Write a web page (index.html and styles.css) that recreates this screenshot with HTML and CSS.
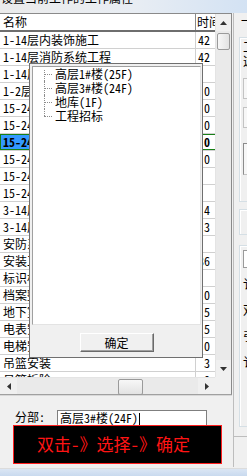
FILE: index.html
```html
<!DOCTYPE html>
<html>
<head>
	<title>设置当前工作的工作属性</title>
	<meta charset="utf-8">
	<link rel="stylesheet" href="styles.css">
</head>
<body>

	<div class="caption"><span>设置当前工作的工作属性</span></div>

	<div class="frame">
		<div class="left">
			<div class="list">
				<div class="grid">
					<div class="head">
						<div class="c1">名称</div>
						<div class="c2">时间</div>
					</div>
					<div class="row"><div class="c1">1-14层内装饰施工</div><div class="c2">42</div></div>
					<div class="row"><div class="c1">1-14层消防系统工程</div><div class="c2">42</div></div>
					<div class="row"><div class="c1">1-14层给排水安装</div><div class="c2"></div></div>
					<div class="row"><div class="c1">1-2层钢结构工程</div><div class="c2">0</div></div>
					<div class="row"><div class="c1">15-24层主体结构</div><div class="c2">0</div></div>
					<div class="row"><div class="c1">15-24层砌体工程</div><div class="c2">0</div></div>
					<div class="row sel"><div class="c1">15-24层内装饰施工</div><div class="c2">0</div></div>
					<div class="row"><div class="c1">15-24层外墙保温</div><div class="c2">0</div></div>
					<div class="row"><div class="c1">15-24层门窗安装</div><div class="c2"></div></div>
					<div class="row"><div class="c1">15-24层屋面工程</div><div class="c2"></div></div>
					<div class="row"><div class="c1">3-14层主体结构</div><div class="c2">4</div></div>
					<div class="row"><div class="c1">3-14层砌体工程</div><div class="c2">3</div></div>
					<div class="row"><div class="c1">安防系统工程</div><div class="c2"></div></div>
					<div class="row"><div class="c1">安装工程</div><div class="c2">36</div></div>
					<div class="row"><div class="c1">标识标牌</div><div class="c2"></div></div>
					<div class="row"><div class="c1">档案整理</div><div class="c2">0</div></div>
					<div class="row"><div class="c1">地下室结构</div><div class="c2">5</div></div>
					<div class="row"><div class="c1">电表安装</div><div class="c2">5</div></div>
					<div class="row"><div class="c1">电梯安装</div><div class="c2">0</div></div>
					<div class="row"><div class="c1">吊篮安装</div><div class="c2">3</div></div>
					<div class="row"><div class="c1">吊篮拆除</div><div class="c2">0</div></div>
				</div>

				<div class="vscroll">
					<div class="arrow"><svg width="7" height="4"><polygon points="0,4 7,4 3.5,0" fill="#333"/></svg></div>
					<div class="vtrack"><div class="vthumb"></div></div>
					<div class="arrow"><svg width="7" height="4"><polygon points="0,0 7,0 3.5,4" fill="#333"/></svg></div>
				</div>

				<div class="hscroll">
					<div class="arrow"><svg width="4" height="7"><polygon points="4,0 4,7 0,3.5" fill="#333"/></svg></div>
					<div class="htrack"><div class="hthumb"></div></div>
					<div class="arrow"><svg width="4" height="7"><polygon points="0,0 0,7 4,3.5" fill="#333"/></svg></div>
				</div>
				<div class="corner"></div>
			</div>

			<div class="form">
				<div class="field">
					<label>分部:</label>
					<div class="input">高层3#楼(24F)<span class="caret"></span></div>
				</div>
				<div class="notice">双击-》选择-》确定</div>
			</div>
		</div>

		<div class="side">
			<div class="panel">
				<div class="tab">
					<div class="tline">一</div>
					<div class="group g1">
						<div class="gtext">工</div>
						<div class="gtext">这</div>
						<div class="box b1"></div>
						<div class="box b2"></div>
						<div class="box b3"></div>
					</div>
					<div class="group g2"></div>
					<div class="group g3">
						<div class="box b4"></div>
						<div class="gtext t1">讠</div>
						<div class="gtext t2">双</div>
						<div class="gtext t2">引</div>
						<div class="gtext t2">讠</div>
					</div>
				</div>
			</div>
		</div>
	</div>

	<div class="taskbar"></div>

	<!-- drop-down tree over the list -->
	<div class="popup">
		<div class="tree">
			<ul>
				<li>高层1#楼(25F)</li>
				<li>高层3#楼(24F)</li>
				<li>地库(1F)</li>
				<li>工程招标</li>
			</ul>
		</div>
		<div class="foot">
			<button>确定</button>
		</div>
	</div>

</body>
</html>
```

FILE: styles.css
```css
body{
	margin:0; width:247px; height:476px; overflow:hidden; position:relative;
	background:#f0f0f0; color:#000;
	font-family:"Noto Sans Mono CJK SC", "Noto Sans CJK SC", sans-serif; font-size:12px;
}

.caption{ height:13px; overflow:hidden; background:linear-gradient(to right,#ebebeb,#e8edf3 55%,#d3e2f3); }
.caption span{ display:block; margin-top:-9px; line-height:14px; padding-left:1px; white-space:nowrap; }

.frame{ display:flex; height:455px; }
.left{ width:232px; display:flex; flex-direction:column; }

/* list view */
.list{
	height:382px; box-sizing:border-box; background:#fff;
	border-top:1px solid #8a8a8a; border-right:1px solid #8a8a8a; border-bottom:1px solid #a0a0a0;
	display:grid; grid-template-columns:215px 16px; grid-template-rows:363px 17px;
}
.grid{ overflow:hidden; }
.head, .row{ display:flex; white-space:nowrap; }
.head{ height:18px; box-sizing:border-box; border-bottom:2px solid #6e6e6e; line-height:16px; }
.head .c1{ border-right:1px solid #8a8a8a; }
.c1{ width:196px; box-sizing:border-box; padding-left:3px; overflow:hidden; border-right:1px solid #d0d0d0; }
.c2{ width:19px; box-sizing:border-box; overflow:hidden; }
.head .c2{ padding-left:1px; }
.row{ height:17px; box-sizing:border-box; border-bottom:1px solid #d0d0d0; line-height:16px; }
.row .c2{ text-align:right; padding-right:5px; }
.row.sel{ box-shadow:inset 0 1px #178017, inset 0 -1px #178017; font-weight:bold; }
.row.sel .c1{ background:#3399ff; box-shadow:inset 1px 1px #178017, inset 0 -1px #178017; }

.vscroll{ display:flex; flex-direction:column; background:#f0f0f0; border-left:1px solid #e4e4e4; }
.vscroll .arrow{ height:17px; display:flex; align-items:center; justify-content:center; }
.vtrack{ flex:1; background:#eaeaea; padding:2px 1px 0 1px; }
.vthumb{ height:15px; border:1px solid #9a9a9a; border-radius:2px; background:linear-gradient(to right,#f7f7f7,#e2e2e2); }

.hscroll{ display:flex; background:#f0f0f0; border-top:1px solid #e4e4e4; }
.hscroll .arrow{ width:17px; display:flex; align-items:center; justify-content:center; }
.htrack{ flex:1; background:#eaeaea; padding:1px 0 1px 101px; }
.hthumb{ width:23px; height:14px; border:1px solid #9a9a9a; border-radius:2px; background:linear-gradient(#f7f7f7,#e2e2e2); }
.corner{ background:#f0f0f0; }

/* bottom form */
.form{ flex:1; border-top:1px solid #d8d8d8; padding-top:14px; }
.field{ display:flex; align-items:flex-start; height:15px; }
.field label{ width:42px; padding-left:15px; line-height:14px; margin-top:0px; }
.input{
	width:150px; height:15px; box-sizing:border-box; background:#fff;
	border:1px solid #7f7f7f; border-bottom:0; padding-left:2px; line-height:14px; white-space:nowrap;
}
.caret{ display:inline-block; width:1px; height:12px; background:#000; vertical-align:-2px; margin-left:1px; }
.notice{
	margin-left:13px; width:209px; height:39px; box-sizing:border-box;
	background:#000; border:1px solid #ff1f1f; color:#ff1414;
	font-size:17px; line-height:36px; text-align:center; padding-right:8px; white-space:nowrap;
}

/* cut-off panel on the right */
.side{ width:15px; overflow:hidden; padding-left:1px; }
.panel{ width:60px; height:454px; border-left:1px solid #bdbdbd; }
.tab{ height:422px; border-bottom:1px solid #bdbdbd; padding-top:1px; }
.tline{ line-height:14px; padding-left:7px; }
.group{ margin-left:5px; border:1px solid #d5dfe5; box-shadow:inset 1px 1px #fff; }
.g1{ margin-top:9px; height:165px; box-sizing:border-box; padding:2px 0 0 3px; }
.g2{ margin-top:7px; height:26px; box-sizing:border-box; }
.g3{ margin-top:10px; height:182px; box-sizing:border-box; padding:4px 0 0 3px; }
.gtext{ line-height:14px; }
.box{ border:1px solid #c3c3c3; background:#f7f7f7; }
.b1{ margin-top:10px; height:19px; }
.b2{ margin-top:8px; height:19px; }
.b3{ margin-top:15px; height:30px; border-color:#8c8c8c #c3c3c3 #c3c3c3 #8c8c8c; }
.b4{ height:16px; border-color:#9a9a9a; background:#fff; }
.t1{ margin-top:9px; }
.t2{ margin-top:12px; }

.taskbar{ height:8px; border-top:1px solid #dcdcdc; background:linear-gradient(#dbe6f4,#c6d8ee); }

/* popup tree */
.popup{
	position:absolute; left:29px; top:63px; width:174px; height:295px; box-sizing:border-box;
	border:1px solid #6f6f6f; background:#f0f0f0; padding:2px 1px 0 2px;
	display:flex; flex-direction:column;
}
.tree{
	height:259px; box-sizing:border-box; background:#fff;
	border:1px solid #a0a0a0; border-right-color:#e3e3e3; border-bottom-color:#e3e3e3;
}
.tree ul{ list-style:none; margin:0; padding:0 0 0 11px; }
.tree li{ position:relative; padding-left:11px; line-height:14px; white-space:nowrap; }
.tree li::before{ content:""; position:absolute; left:0; top:7px; width:8px; border-top:1px dotted #8c8c8c; }
.tree li::after{ content:""; position:absolute; left:0; top:0; bottom:0; border-left:1px dotted #8c8c8c; }
.tree li:first-child::after{ top:3px; }
.tree li:last-child::after{ bottom:7px; }
.foot{ flex:1; display:flex; justify-content:center; padding-top:8px; }
.foot button{
	width:74px; height:19px; padding:0; background:#f0f0f0;
	border:1px solid; border-color:#fff #6a6a6a #6a6a6a #fff; box-shadow:inset -1px -1px #a0a0a0;
	font-family:"Noto Sans Mono CJK SC", "Noto Sans CJK SC", sans-serif; font-size:12px; line-height:16px; color:#000;
}
```
